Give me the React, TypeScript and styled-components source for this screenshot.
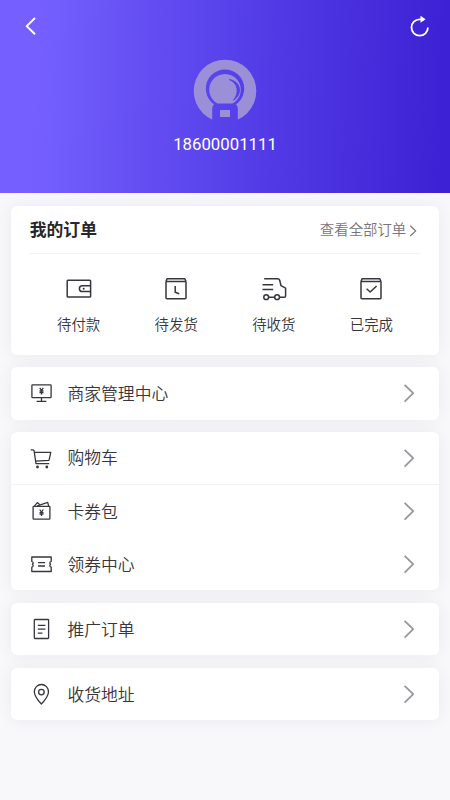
import React from 'react';
import styled, { createGlobalStyle } from 'styled-components';

const GlobalStyle = createGlobalStyle`
  * { box-sizing: border-box; }
  body {
    margin: 0;
    background: #f8f7fa;
    color: #38363c;
    font-family: Roboto, "Noto Sans CJK SC", sans-serif;
  }
`;

const Page = styled.div`
  display: flex;
  flex-direction: column;
  min-height: 800px;
`;

const Header = styled.header`
  height: 193.4px;
  display: flex;
  flex-direction: column;
  color: #fff;
  background: linear-gradient(92deg, #7560ff 8%, #5640e9 52%, #3d21d4 98%);
`;

const NavBar = styled.nav`
  height: 52px;
  padding: 0 18px;
  display: flex;
  align-items: center;
  justify-content: space-between;
`;

const IconButton = styled.button`
  display: flex;
  padding: 0;
  border: 0;
  background: none;
  color: inherit;
`;

const Profile = styled.div`
  display: flex;
  flex-direction: column;
  align-items: center;
  padding-top: 7px;
`;

const Phone = styled.div`
  margin-top: 11px;
  font-size: 16.8px;
  line-height: 20px;
`;

const Content = styled.main`
  display: flex;
  flex-direction: column;
  gap: 12.2px;
  padding: 12.5px 11px 0;
`;

const Card = styled.section`
  border-radius: 6px;
  background: #fff;
  box-shadow: 0 0 16px rgba(40, 25, 50, 0.06);
`;

const OrderCard = styled(Card)`
  height: 149px;
  padding: 0 18.8px;
`;

const OrderHead = styled.div`
  height: 48.5px;
  display: flex;
  align-items: center;
  justify-content: space-between;
  border-bottom: 1px solid #f3f2f5;
`;

const Title = styled.h2`
  margin: 0;
  font-size: 16.8px;
  font-weight: 700;
  line-height: 24px;
  color: #28262b;
`;

const AllOrders = styled.div`
  display: flex;
  align-items: center;
  gap: 3px;
  padding: 3px 2px 0 0;
  font-size: 14.4px;
  font-weight: 350;
  line-height: 20px;
  color: #77757b;
`;

const StatusGrid = styled.div`
  display: grid;
  grid-template-columns: repeat(4, 1fr);
  padding-top: 20.5px;
`;

const Status = styled.div`
  display: flex;
  flex-direction: column;
  align-items: center;
  gap: 12px;
  font-size: 14.4px;
  font-weight: 350;
  line-height: 21px;
`;

const Row = styled.div<{ $divided?: boolean }>`
  height: 52.8px;
  display: flex;
  align-items: center;
  padding: 0 24px 0 18px;
  border-bottom: ${(p) => (p.$divided ? '1px solid #f3f2f5' : '0')};
`;

const RowLabel = styled.span`
  flex: 1;
  margin-left: 14.5px;
  padding-top: 1px;
  font-size: 16.8px;
  font-weight: 350;
  line-height: 24px;
`;

const Svg = styled.svg`
  display: block;
  flex: none;
  fill: none;
  stroke: currentColor;
  stroke-linejoin: round;
`;

const Solid = styled.g`
  fill: currentColor;
  stroke: none;
`;

const Yen = ({ x, y }: { x: number; y: number }) => (
  <path
    transform={`translate(${x} ${y})`}
    d="M-1.8-3.2 0-.6 1.8-3.2M0-.6V3.4M-2-.1H2M-2 1.5H2"
    strokeWidth="1.3"
  />
);

const glyphs = {
  monitor: (
    <>
      <rect x="2.9" y="3.9" width="19.2" height="12.8" rx=".7" />
      <path d="M12.5 16.7v3.6M7.6 20.4h9.8" />
      <Yen x={12.5} y={10} />
    </>
  ),
  cart: (
    <>
      <path d="M1.7 3.8h2.2q1 0 1.2 1.1L7 17.6h13.2M5.4 6.4H21.8L20 14.3 6.6 15.2" />
      <Solid>
        <circle cx="8.5" cy="21" r="1.4" />
        <circle cx="17.8" cy="21" r="1.4" />
      </Solid>
    </>
  ),
  wallet: (
    <>
      <rect x="4.1" y="7.4" width="16.8" height="12.8" rx=".7" />
      <path d="M5.4 7.2 8.3 3.6l2.2 1.9M8.3 6.9l10.4-3.5 1 3.8" />
      <Yen x={12.5} y={13.7} />
    </>
  ),
  coupon: (
    <path d="M2.8 5h19.4v4.4c-1.7.6-1.7 2 -.6 2.9-1.1.9-1.1 2.3.6 2.9v4.3H2.8v-4.3c1.7-.6 1.7-2 .6-2.9 1.1-.9 1.1-2.3-.6-2.9zM9 10.7h7M9 14h7" />
  ),
  doc: (
    <>
      <rect x="5.3" y="2.5" width="14.3" height="19" rx=".7" />
      <path d="M8.8 8.3h7.6M8.8 12.2h7.6M8.8 16.2h4.6" />
    </>
  ),
  pin: (
    <>
      <path d="M12.4 22C9 18.5 5.3 14.2 5.3 9.8a7.1 7.3 0 0 1 14.2 0c0 4.4-3.7 8.7-7.1 12.2z" />
      <circle cx="12.4" cy="10.1" r="2.8" />
    </>
  ),
};

const statusGlyphs = {
  pay: (
    <>
      <rect x="2.2" y="5.3" width="23.4" height="16.8" rx=".8" />
      <path d="M25.6 10.8h-8.3a2.9 2.9 0 0 0 0 5.8h8.3" />
      <Solid><circle cx="18.7" cy="13.7" r="1" /></Solid>
    </>
  ),
  ship: (
    <>
      <path d="M4 6.5 5 3.7H22.8l1.2 2.8M4 6.5H24V22.8q0 .9-.9.9H4.9q-.9 0-.9-.9z" />
      <path d="M13.2 11v6.2l4 1.5" />
    </>
  ),
  receive: (
    <>
      <path d="M4.2 3.8H17.5q1.8 0 2.2 1.5l1.3 5.4 4.6 2.4v7.8q0 1.3-1.3 1.3H19.6M2.5 9.7h10.7M2.5 14.4h10.7M8.5 22.2h6" />
      <circle cx="6.2" cy="22.2" r="2.4" />
      <circle cx="17.1" cy="22.2" r="2.4" />
    </>
  ),
  done: (
    <>
      <path d="M4 6.5 5 3.7H22.8l1.2 2.8M4 6.5H24V22.8q0 .9-.9.9H4.9q-.9 0-.9-.9z" />
      <path d="M9.6 13.8l3.6 3.2 6.4-6" />
    </>
  ),
};

const statuses: { icon: keyof typeof statusGlyphs; label: string }[] = [
  { icon: 'pay', label: '待付款' },
  { icon: 'ship', label: '待发货' },
  { icon: 'receive', label: '待收货' },
  { icon: 'done', label: '已完成' },
];

type Item = { icon: keyof typeof glyphs; label: string; divided?: boolean };

const groups: Item[][] = [
  [{ icon: 'monitor', label: '商家管理中心' }],
  [
    { icon: 'cart', label: '购物车', divided: true },
    { icon: 'wallet', label: '卡券包' },
    { icon: 'coupon', label: '领券中心' },
  ],
  [{ icon: 'doc', label: '推广订单' }],
  [{ icon: 'pin', label: '收货地址' }],
];

const RowChevron = styled(Svg)`
  color: #99979d;
`;

const Avatar = () => (
  <Svg width="64" height="64" viewBox="0 0 64 64">
    <defs>
      <clipPath id="avatar-clip">
        <rect width="64" height="61.5" />
      </clipPath>
      <mask id="avatar-cutout">
        <rect width="64" height="64" fill="#fff" stroke="none" />
        <g stroke="none" fill="#000">
          <circle cx="32" cy="29.7" r="19.2" />
          <path d="M19.2 64V50q0-5.6 5-5.6h15.6q5 0 5 5.6v14z" />
        </g>
        <g stroke="none" fill="#fff">
          <path d="M24.5 44.6a15.8 15.8 0 1 1 15 0z" />
          <rect x="27" y="51" width="10" height="7" />
        </g>
        <path
          d="M36.3 20.6c8.4 3.1 10.6 13.2 4.1 20.6 9.2-5.2 8.2-18.9-4.1-20.6z"
          fill="#000" stroke="#000" strokeWidth=".9"
        />
      </mask>
    </defs>
    <g clipPath="url(#avatar-clip)">
      <circle cx="32" cy="32" r="31.3" fill="#9b8fd8" stroke="none" mask="url(#avatar-cutout)" />
    </g>
  </Svg>
);

export default function App() {
  return (
    <Page>
      <GlobalStyle />
      <Header>
        <NavBar>
          <IconButton aria-label="返回">
            <Svg width="26" height="26" strokeWidth="2">
              <path d="M17 5 8.7 13.1 17 21.3" />
            </Svg>
          </IconButton>
          <IconButton aria-label="刷新">
            <Svg width="26" height="26" strokeWidth="1.8">
              <path d="M15 6.3h-1.3a8.2 8.2 0 1 0 8.2 8.2" />
              <Solid><path d="M14.5 2.8 19.6 6.3l-5.1 3.5z" /></Solid>
            </Svg>
          </IconButton>
        </NavBar>
        <Profile>
          <Avatar />
          <Phone>18600001111</Phone>
        </Profile>
      </Header>
      <Content>
        <OrderCard>
          <OrderHead>
            <Title>我的订单</Title>
            <AllOrders>
              查看全部订单
              <Svg width="9" height="14" strokeWidth="1.3">
                <path d="M1.3 1.8 6.7 6.9 1.3 12" />
              </Svg>
            </AllOrders>
          </OrderHead>
          <StatusGrid>
            {statuses.map(({ icon, label }) => (
              <Status key={icon}>
                <Svg width="28" height="28" strokeWidth="1.5">{statusGlyphs[icon]}</Svg>
                {label}
              </Status>
            ))}
          </StatusGrid>
        </OrderCard>
        {groups.map((items) => (
          <Card key={items[0].icon}>
            {items.map(({ icon, label, divided }) => (
              <Row key={icon} $divided={divided}>
                <Svg width="24" height="24" strokeWidth="1.3">{glyphs[icon]}</Svg>
                <RowLabel>{label}</RowLabel>
                <RowChevron width="12" height="20" strokeWidth="1.8">
                  <path d="M1.6 1.8 10.2 10.2 1.6 18.6" />
                </RowChevron>
              </Row>
            ))}
          </Card>
        ))}
      </Content>
    </Page>
  );
}
